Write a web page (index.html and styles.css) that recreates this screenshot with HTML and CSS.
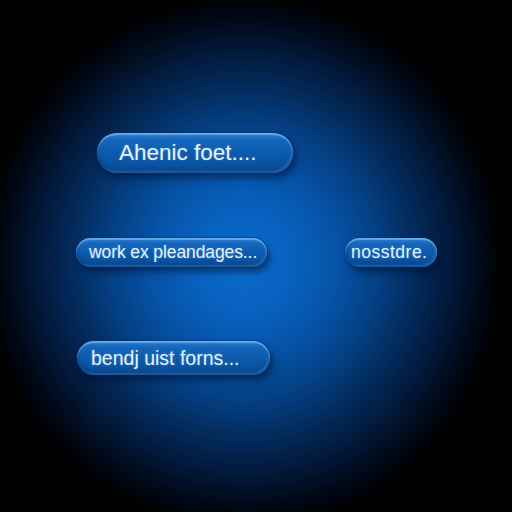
FILE: index.html
```html
<!DOCTYPE html>
<html>
<head>
<meta charset="utf-8">
<link rel="stylesheet" href="styles.css">
</head>
<body>
<div class="stage">
  <div class="row row-1">
    <div class="pill pill-lg">Ahenic foet....</div>
  </div>
  <div class="row row-2">
    <div class="pill pill-sm pill-wide">work ex pleandages...</div>
    <div class="pill pill-sm pill-short">nosstdre.</div>
  </div>
  <div class="row row-3">
    <div class="pill pill-md">bendj uist forns...</div>
  </div>
</div>
</body>
</html>
```

FILE: styles.css
```css
html, body {
  margin: 0;
  padding: 0;
  background: #000;
}

.stage {
  width: 512px;
  height: 512px;
  box-sizing: border-box;
  padding-top: 133px;
  display: flex;
  flex-direction: column;
  align-items: flex-start;
  background:
    radial-gradient(ellipse 262px 268px at 244px 262px,
      #0b6bcc 0%,
      #0862c0 18%,
      #0652a6 36%,
      #043f82 52%,
      #032c5e 65%,
      #021a3c 78%,
      #010b1c 89%,
      #000207 97%,
      #000 100%);
  font-family: "Liberation Sans", Arial, sans-serif;
  overflow: hidden;
}

.row {
  display: flex;
  align-items: center;
}

.row-1 {
  padding-left: 97px;
}

.row-2 {
  margin-top: 65px;
  padding-left: 76px;
  gap: 78px;
}

.row-3 {
  margin-top: 74px;
  padding-left: 77px;
}

.pill {
  box-sizing: border-box;
  display: flex;
  align-items: center;
  border-radius: 999px;
  color: #e6f3ff;
  white-space: nowrap;
  background: linear-gradient(180deg, #2b7fd2 0%, #1467bd 18%, #0c5aac 50%, #0a529f 80%, #0b4d94 100%);
  box-shadow:
    inset 0 2px 1px rgba(150, 210, 255, 0.55),
    inset -2px -2px 3px rgba(90, 160, 230, 0.35),
    inset 0 -3px 4px rgba(0, 25, 70, 0.35),
    0 0 0 1px rgba(0, 40, 100, 0.35),
    3px 5px 7px rgba(0, 10, 40, 0.5);
  text-shadow: 0 0 3px rgba(150, 210, 255, 0.35);
}

.pill-lg {
  width: 196px;
  height: 40px;
  padding-left: 22px;
  font-size: 22.5px;
}

.pill-sm {
  height: 29px;
  font-size: 17.5px;
}

.pill-wide {
  width: 191px;
  padding-left: 13px;
  letter-spacing: -0.1px;
}

.pill-short {
  width: 92px;
  padding-left: 6px;
  letter-spacing: 0.5px;
}

.pill-md {
  width: 193px;
  height: 34px;
  padding-left: 14px;
  font-size: 19.5px;
}
```
